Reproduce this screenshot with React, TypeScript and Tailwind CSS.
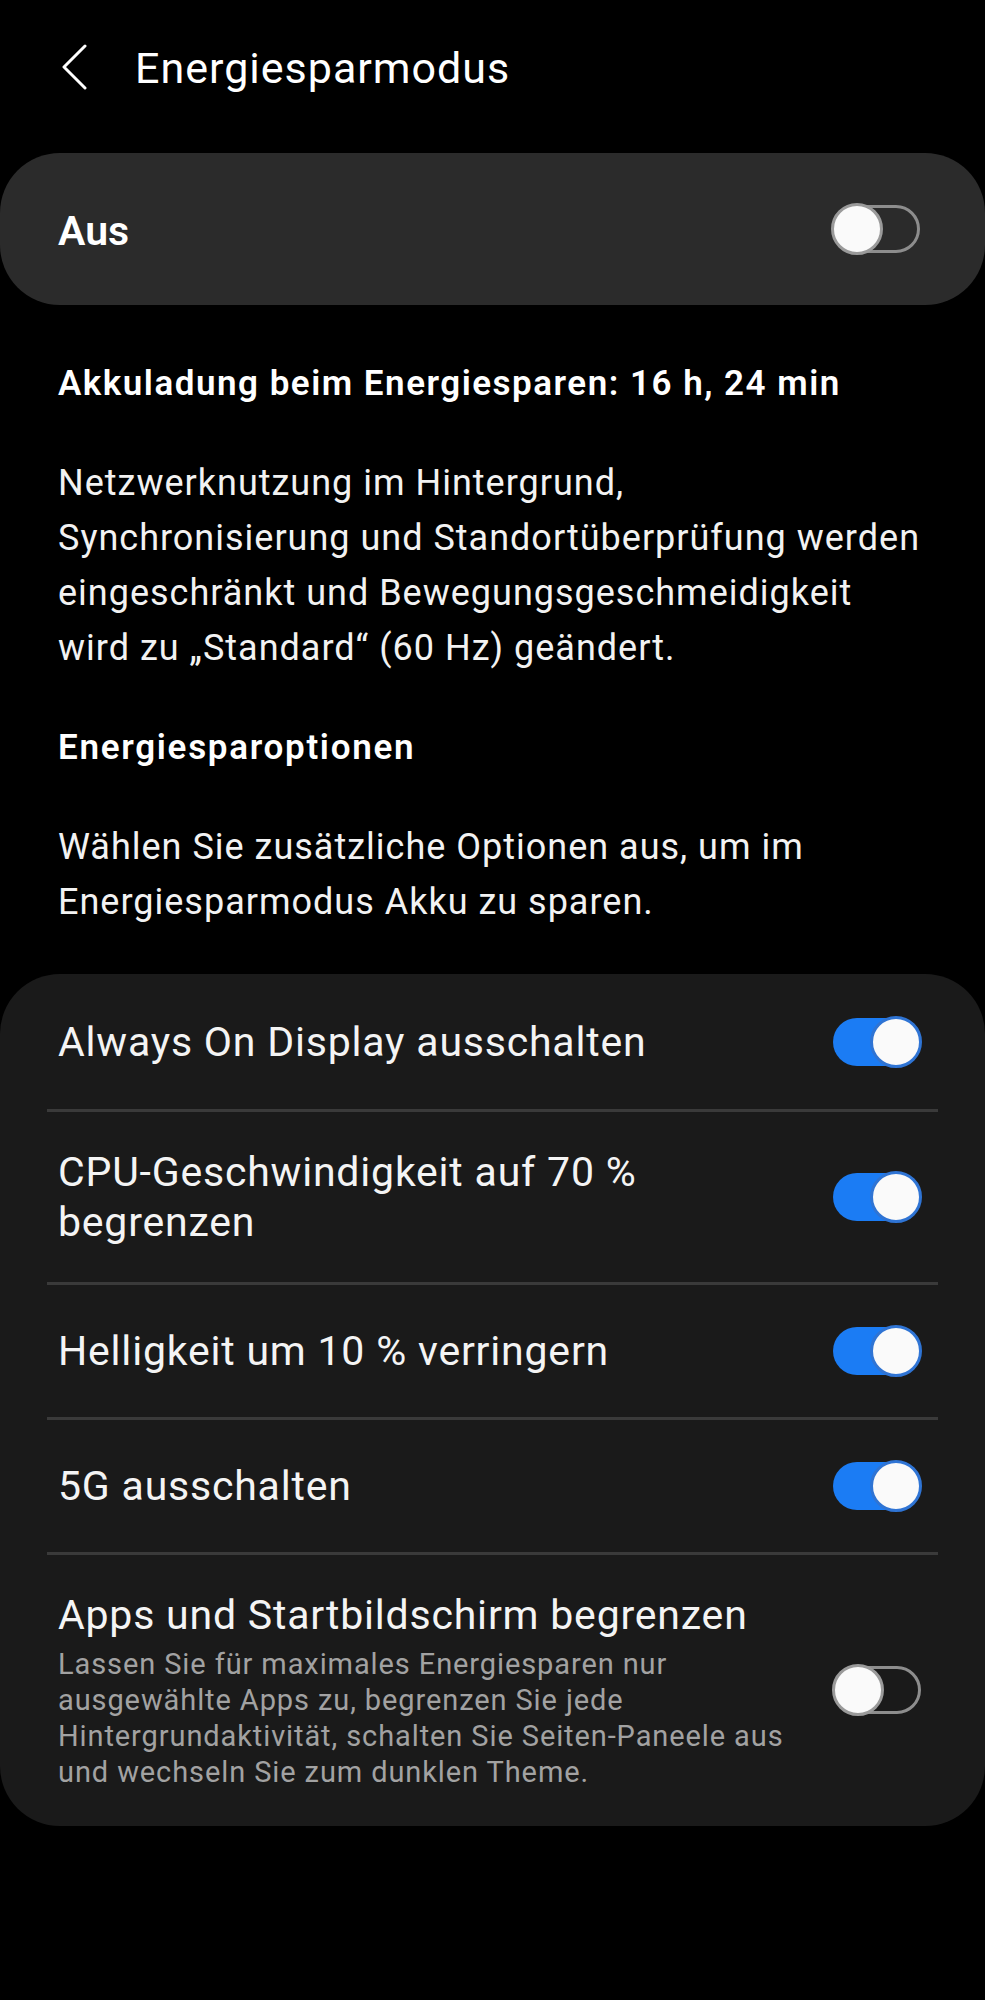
import { clsx } from 'clsx'

function Toggle({ on }: { on: boolean }) {
    return (
        <div
            className={clsx(
                'relative shrink-0 w-[88px] h-[48px] rounded-full',
                on ? 'bg-[#1b7cf4]' : 'border-[3px] border-[#8d8d8d]'
            )}
        >
            <div
                className={clsx(
                    'absolute top-1/2 -translate-y-1/2 w-[52px] h-[52px] rounded-full bg-[#fafafa] border-[3px]',
                    on ? 'right-[-1px] border-[#2f74d4]' : 'left-[-4px] border-[#9a9a9a]'
                )}
            />
        </div>
    )
}

interface OptionRowProps {
    title: React.ReactNode
    subtitle?: React.ReactNode
    on: boolean
    first?: boolean
}

function OptionRow({ title, subtitle, on, first }: OptionRowProps) {
    return (
        <div
            className={clsx(
                'flex items-center justify-between min-h-[135px] py-[35px] pl-[11px] pr-[17px]',
                !first && 'border-t-[3px] border-[#3a3a3a]'
            )}
        >
            <div className="flex-1">
                <div className="text-[41px] leading-[50px] tracking-[0.8px] text-[#f4f4f4]">{title}</div>
                {subtitle && (
                    <div className="mt-[6px] text-[29px] leading-[36px] tracking-[0.9px] text-[#a2a2a2]">
                        {subtitle}
                    </div>
                )}
            </div>
            <Toggle on={on} />
        </div>
    )
}

export default function App() {
    return (
        <div className="min-h-[2000px] w-[985px] bg-black text-[#f2f2f2] font-['Roboto',sans-serif]">
            {/* Header */}
            <header className="flex items-center h-[134px] pl-[62px]">
                <svg width="25" height="46" viewBox="0 0 25 46" fill="none">
                    <path d="M23 2 L2 23 L23 44" stroke="#ffffff" strokeWidth="3" strokeLinecap="round" strokeLinejoin="round" />
                </svg>
                <h1 className="ml-[48px] pt-[2px] text-[43px] leading-[50px] tracking-[1px] text-white">Energiesparmodus</h1>
            </header>

            {/* Master switch */}
            <div className="mt-[19px] h-[152px] rounded-[60px] bg-[#2b2b2b] flex items-center justify-between pl-[58px] pr-[65px]">
                <span className="pt-[5px] text-[41px] font-semibold text-white">Aus</span>
                <Toggle on={false} />
            </div>

            <div className="px-[58px]">
                <p className="mt-[59px] text-[35px] leading-[40px] tracking-[1.5px] font-semibold text-white">
                    Akkuladung beim Energiesparen: 16 h, 24 min
                </p>
                <p className="mt-[52px] text-[36px] leading-[55px] tracking-[1px]">
                    Netzwerknutzung im Hintergrund,
                    <br />
                    Synchronisierung und Standortüberprüfung werden
                    <br />
                    eingeschränkt und Bewegungsgeschmeidigkeit
                    <br />
                    wird zu „Standard“ (60 Hz) geändert.
                </p>
                <p className="mt-[52px] text-[35px] leading-[40px] tracking-[1.7px] font-semibold text-white">
                    Energiesparoptionen
                </p>
                <p className="mt-[52px] text-[36px] leading-[55px] tracking-[1px]">
                    Wählen Sie zusätzliche Optionen aus, um im
                    <br />
                    Energiesparmodus Akku zu sparen.
                </p>
            </div>

            {/* Options */}
            <div className="mt-[44px] rounded-[60px] bg-[#1a1a1a] px-[47px] pb-[1px]">
                <OptionRow first on title="Always On Display ausschalten" />
                <OptionRow
                    on
                    title={
                        <>
                            CPU-Geschwindigkeit auf 70 %
                            <br />
                            begrenzen
                        </>
                    }
                />
                <OptionRow on title="Helligkeit um 10 % verringern" />
                <OptionRow on title="5G ausschalten" />
                <OptionRow
                    on={false}
                    title="Apps und Startbildschirm begrenzen"
                    subtitle={
                        <>
                            Lassen Sie für maximales Energiesparen nur
                            <br />
                            ausgewählte Apps zu, begrenzen Sie jede
                            <br />
                            Hintergrundaktivität, schalten Sie Seiten-Paneele aus
                            <br />
                            und wechseln Sie zum dunklen Theme.
                        </>
                    }
                />
            </div>
        </div>
    )
}
